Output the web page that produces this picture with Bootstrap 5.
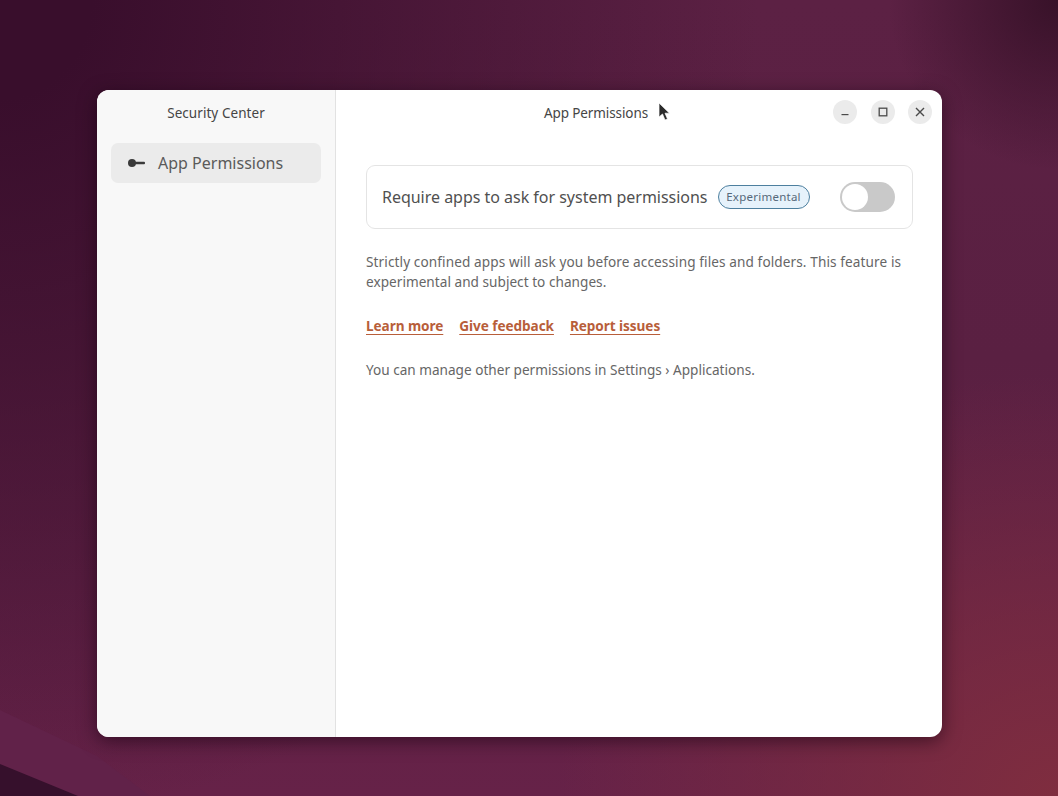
<!DOCTYPE html>
<html lang="en">
<head>
<meta charset="utf-8">
<title>Security Center</title>
<link href="https://cdn.jsdelivr.net/npm/bootstrap@5.3.0/dist/css/bootstrap.min.css" rel="stylesheet">
<style>
html,body{height:100%;margin:0;overflow:hidden}
body{font-family:"Noto Sans","Open Sans",sans-serif;position:relative}
.desk{width:1058px;height:796px;padding:90px 116px 59px 97px;position:relative;
 background:
 radial-gradient(circle at 100% 0,rgba(52,16,38,.9) 0,rgba(52,16,38,0) 170px),
 radial-gradient(500px 420px at 100% 100%,#7f2d3f 0,rgba(127,45,63,0) 100%),
 radial-gradient(760px 820px at 0 0,#390e2c 0,#390e2c 12%,rgba(57,14,44,0) 100%),
 linear-gradient(180deg,#5c2144 0,#5a2042 45%,#662248 100%)}
.deskband{position:absolute;left:0;bottom:0;width:190px;height:86px}
.gwin{height:100%;border-radius:12px;overflow:hidden;background:#fff;position:relative;z-index:1;box-shadow:0 4px 18px rgba(20,0,15,.55)}
.side{width:239px;background:#f8f8f8;border-right:1px solid #e2e2e2;flex:none}
.side-title{height:46px;font-size:13.5px;color:#454545;letter-spacing:.06px}
.side-item{margin:7px 14px 0 14px;height:40px;border-radius:7px;background:#ebebeb;padding-left:16px;color:#5a5a5a;font-size:16px;letter-spacing:0}
.side-item svg{margin-right:13px}
.head{height:46px;position:relative}
.main-title{font-size:13.5px;color:#454545;letter-spacing:-.1px;padding-right:86px}
.winbtns{position:absolute;right:10px;top:10px;gap:13.5px}
.wbtn{width:24px;height:24px;border-radius:50%;background:#ebebeb}
.pane{padding:29px 29px 0 30px}
.rowbox{height:64px;border:1px solid #e4e4e4;border-radius:9px;padding:0 17px 0 15px;color:#505050;font-size:16px;letter-spacing:-.02px}
.pill{font-size:11.5px;letter-spacing:.25px;color:#56697a;background:#e6f2fb;border:1px solid #4d7f9e;border-radius:12px;height:24px;width:92px;margin-left:10px}
.swt{width:55px;height:30px;border-radius:15px;background:#c9c9c9;padding:2px}
.knob{width:26px;height:26px;background:#fff;border-radius:50%}
.para{font-size:13.6px;line-height:20px;color:#666;margin:23px 0 0;letter-spacing:.03px}
.line-wide{letter-spacing:.1px}
.lnks{margin-top:24px;gap:16px;height:20px;line-height:20px}
.lnks a{color:#b85e3a;font-weight:700;font-size:13.6px;letter-spacing:-.07px;text-decoration:underline;text-underline-offset:3px}
.para2{margin-top:24px;letter-spacing:0}
.ptr{position:absolute;left:658px;top:102px;z-index:2}
</style>
</head>
<body>
<div class="desk">
<svg class="deskband" viewBox="0 0 190 86"><path d="M0 0 L97 46 L150 86 L0 86Z" fill="#612249"/><path d="M0 54 L78 86 L0 86Z" fill="#36102c"/></svg>
<div class="gwin d-flex">
 <aside class="side d-flex flex-column">
  <div class="side-title d-flex align-items-center justify-content-center">Security Center</div>
  <div class="side-item d-flex align-items-center">
   <svg width="18" height="10" viewBox="0 0 18 10"><circle cx="5" cy="5" r="4" fill="#3a3a3a"/><rect x="8" y="3.7" width="10" height="2.6" rx="1" fill="#3a3a3a"/></svg>
   <span>App Permissions</span>
  </div>
 </aside>
 <main class="flex-grow-1 d-flex flex-column">
  <div class="head d-flex align-items-center justify-content-center">
   <div class="main-title">App Permissions</div>
   <div class="winbtns d-flex">
    <div class="wbtn d-flex align-items-center justify-content-center"><svg width="10" height="10" viewBox="0 0 10 10"><rect x="1.5" y="7" width="7" height="1.2" fill="#4a4a4a"/></svg></div>
    <div class="wbtn d-flex align-items-center justify-content-center"><svg width="10" height="10" viewBox="0 0 10 10"><rect x="1.2" y="1.2" width="7.6" height="7.6" fill="none" stroke="#4a4a4a" stroke-width="1.3"/></svg></div>
    <div class="wbtn d-flex align-items-center justify-content-center"><svg width="10" height="10" viewBox="0 0 10 10"><path d="M1 1 9 9M9 1 1 9" stroke="#4a4a4a" stroke-width="1.4"/></svg></div>
   </div>
  </div>
  <div class="pane">
   <div class="rowbox d-flex align-items-center">
    <span>Require apps to ask for system permissions</span>
    <span class="pill d-flex align-items-center justify-content-center">Experimental</span>
    <span class="swt ms-auto d-block"><span class="knob d-block"></span></span>
   </div>
   <p class="para"><span class="line-wide">Strictly confined apps will ask you before accessing files and folders. This feature is</span> experimental and subject to changes.</p>
   <div class="lnks d-flex">
    <a href="#">Learn more</a><a href="#">Give feedback</a><a href="#">Report issues</a>
   </div>
   <p class="para para2">You can manage other permissions in Settings › Applications.</p>
  </div>
 </main>
</div>
<svg class="ptr" width="13" height="20" viewBox="0 0 13 20"><path d="M1 1V15L4.5 12L7 18L9.5 17L7 11.2H11.5Z" fill="#2b2b2b" stroke="#fff" stroke-width=".7"/></svg>
</div>
</body>
</html>
